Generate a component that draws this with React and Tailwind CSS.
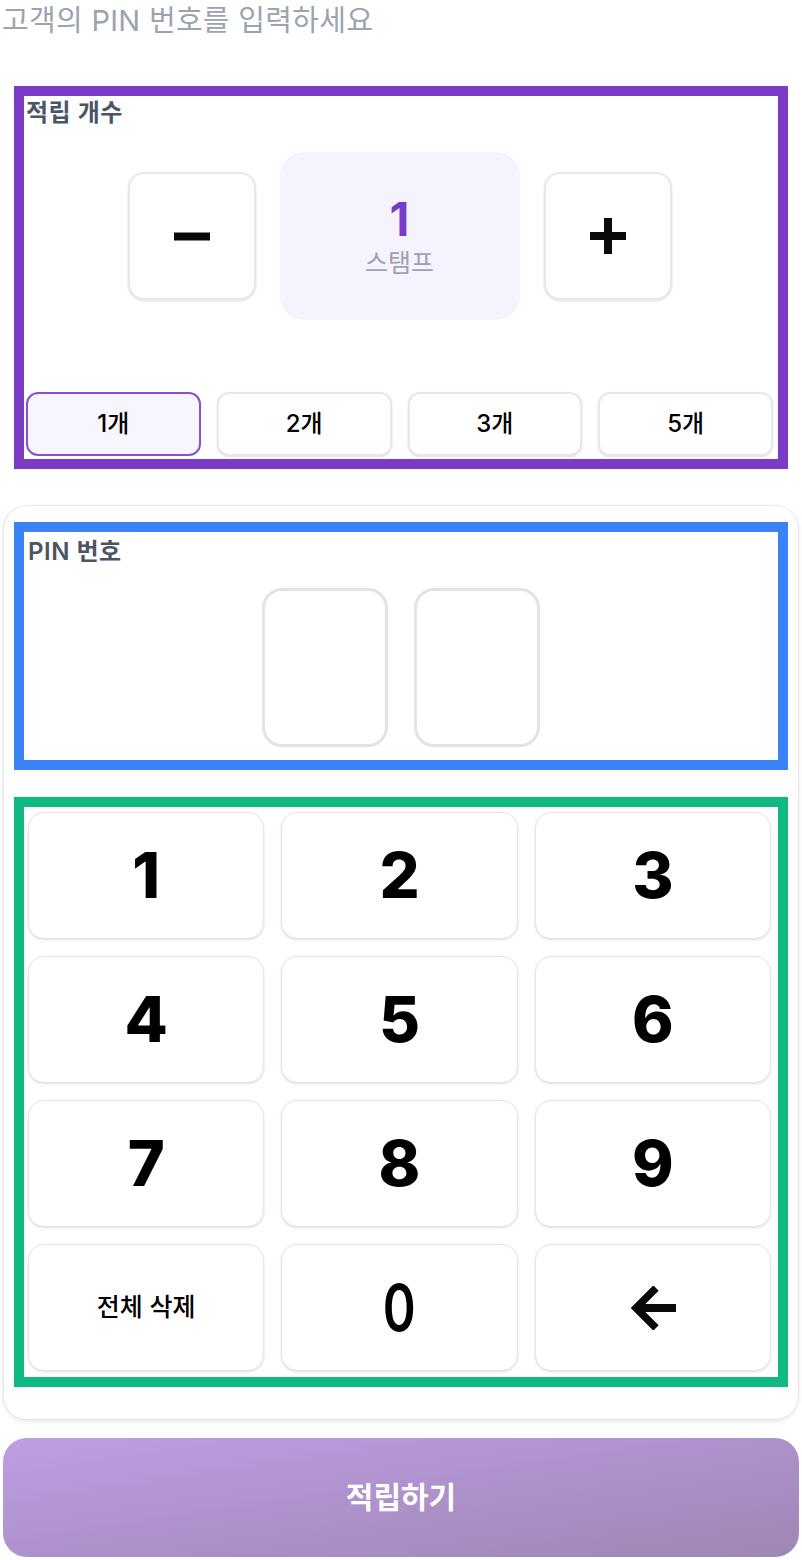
import React, { useState } from "react";

const FONT = { fontFamily: 'Inter, "Noto Sans CJK KR", "Noto Sans", sans-serif' };

const keys = ["1", "2", "3", "4", "5", "6", "7", "8", "9", "clear", "0", "back"];
const chips = [1, 2, 3, 5];

function BackArrow() {
  return (
    <svg width="46" height="44" viewBox="0 0 46 44" fill="none">
      <path d="M46 22H7" stroke="#0a0a0a" strokeWidth="8" />
      <path d="M26 2L6 22L26 42" stroke="#0a0a0a" strokeWidth="7.5" strokeLinejoin="miter" />
    </svg>
  );
}

export default function App() {
  const [count, setCount] = useState(1);
  const [pin, setPin] = useState("");

  const press = (k) => {
    if (k === "clear") return setPin("");
    if (k === "back") return setPin((p) => p.slice(0, -1));
    setPin((p) => (p.length < 2 ? p + k : p));
  };

  return (
    <div className="min-h-[1560px] w-[802px] bg-white px-[3px] text-black" style={FONT}>
      {/* Heading */}
      <p className="h-[40px] -ml-[1px] text-[29px] leading-[42px] tracking-[0.3px] text-[#9ca3af]">
        고객의 PIN 번호를 입력하세요
      </p>

      {/* Stamp count */}
      <div className="mx-[11px] mt-[46px] border-[10px] border-[#7b3bc6] pl-[2px] pr-[5px] pb-[3px]">
        <h3 className="text-[24px] font-semibold leading-[34px] tracking-[0.5px] text-[#4b5563]">적립 개수</h3>

        <div className="mt-[22px] flex items-center justify-center gap-6">
          <button
            onClick={() => setCount((c) => Math.max(1, c - 1))}
            className="flex h-[128px] w-[128px] items-center justify-center rounded-2xl border-2 border-[#e8e8e8] bg-white shadow-sm"
          >
            <svg width="36" height="36" viewBox="0 0 36 36">
              <rect x="0" y="14.5" width="36" height="8" fill="#0a0a0a" />
            </svg>
          </button>
          <div className="flex h-[168px] w-[240px] flex-col items-center justify-center rounded-3xl bg-[#f5f3fd]">
            <span className="text-[46px] font-bold leading-[50px] text-[#7b3bc9]">{count}</span>
            <span className="mt-[4px] text-[25px] leading-[30px] text-[#9ca3af]">스탬프</span>
          </div>
          <button
            onClick={() => setCount((c) => c + 1)}
            className="flex h-[128px] w-[128px] items-center justify-center rounded-2xl border-2 border-[#e8e8e8] bg-white shadow-sm"
          >
            <svg width="36" height="36" viewBox="0 0 36 36">
              <rect x="0" y="14" width="36" height="8" fill="#0a0a0a" />
              <rect x="14" y="0" width="8" height="36" fill="#0a0a0a" />
            </svg>
          </button>
        </div>

        <div className="mt-[72px] grid grid-cols-4 gap-[16px]">
          {chips.map((n) => (
            <button
              key={n}
              onClick={() => setCount(n)}
              className={
                count === n
                  ? "h-[64px] rounded-xl border-2 border-[#8b4fd3] bg-[#f7f5fe] text-[24px] font-medium"
                  : "h-[64px] rounded-xl border-2 border-[#e8e8e8] bg-white text-[24px] font-medium shadow-sm"
              }
            >
              {n}개
            </button>
          ))}
        </div>
      </div>

      {/* PIN card */}
      <div className="mt-[36px] rounded-3xl border border-[#e5e7eb] bg-white px-[10px] pt-[16px] pb-[32px] shadow-[0_2px_4px_rgba(0,0,0,0.08)]">
        <div className="border-[10px] border-[#3b82f6] pt-[3px] pb-[13px]">
          <h3 className="pl-[4px] text-[24px] font-semibold leading-[34px] tracking-[0.5px] text-[#4b5563]">PIN 번호</h3>
          <div className="mt-[19px] flex justify-center gap-[26px]">
            {[0, 1].map((i) => (
              <div
                key={i}
                className="flex h-[159px] w-[126px] items-center justify-center rounded-[20px] border-[3px] border-[#e0e3e8] text-[56px] font-bold"
              >
                {pin[i] ? "•" : ""}
              </div>
            ))}
          </div>
        </div>

        <div className="mt-[27px] border-[10px] border-[#10b981] pl-[4px] pr-[7px] pt-[5px] pb-[6px]">
          <div className="grid grid-cols-3 gap-[17px]">
            {keys.map((k) => (
              <button
                key={k}
                onClick={() => press(k)}
                className="flex h-[127px] items-center justify-center rounded-2xl border-[1.5px] border-[#e5e5e5] bg-white shadow-sm"
              >
                {k === "clear" ? (
                  <span className="text-[25px] font-medium">전체 삭제</span>
                ) : k === "back" ? (
                  <BackArrow />
                ) : (
                  <span
                    className={
                      k === "0"
                        ? "text-[64px] font-semibold leading-none scale-x-[0.78]"
                        : "text-[63px] font-extrabold leading-none"
                    }
                  >
                    {k}
                  </span>
                )}
              </button>
            ))}
          </div>
        </div>
      </div>

      {/* Submit */}
      <button className="mt-[18px] flex h-[119px] w-full items-center justify-center rounded-3xl bg-linear-to-br from-[#bf9de3] to-[#9d86b4] text-[30px] font-bold text-white">
        적립하기
      </button>
    </div>
  );
}
